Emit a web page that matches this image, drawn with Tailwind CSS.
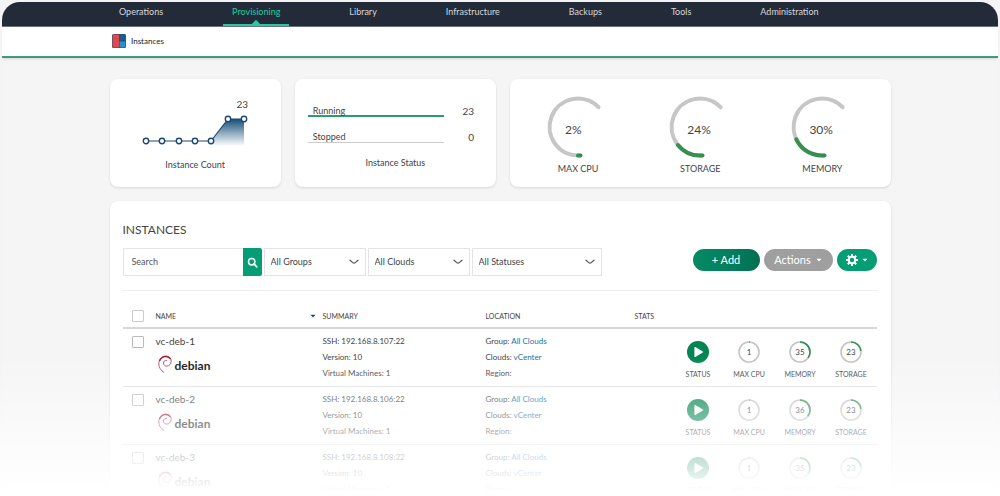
<!DOCTYPE html>
<html lang="en">
<head>
<meta charset="utf-8">
<title>Instances</title>
<script src="https://cdn.jsdelivr.net/npm/@tailwindcss/browser@4"></script>
</head>
<body class="relative h-screen overflow-hidden bg-[#f4f4f6] px-[2px] pt-[2px] font-['Lato',sans-serif] text-[9px] leading-[12px] text-[#444]">
<svg class="hidden">
  <symbol id="swirl" viewBox="0 0 14 18">
    <path d="M5.800 17.300C2.600 15.400 .8 12.400 .8 9C.8 4.400 3.800 1.200 7.600 1.100C11 1 13.300 3.300 13.200 6.200C13.100 9 11.200 11 9 11.100C7 11.200 5.500 9.900 5.500 8.100C5.500 6.400 6.700 5.200 8.600 5.300" fill="none" stroke="#b23a54" stroke-width=".9" stroke-linecap="round"/>
    <path d="M1.600 5.600C3.400 1.400 9 0 12.200 3.400" fill="none" stroke="#a8213f" stroke-width="1.400" stroke-linecap="round"/>
  </symbol>
  <symbol id="chevron" viewBox="0 0 10 6"><path d="M1 1.200C2.600 2.400 3.600 4.200 5 4.200S7.400 2.400 9 1.200" fill="none" stroke="#555" stroke-width="1.200" stroke-linecap="round"/></symbol>
  <symbol id="caret" viewBox="0 0 6 4"><path d="M.5 .8H5.500L3 3.400Z" fill="currentColor"/></symbol>
</svg>

<div class="h-full overflow-hidden rounded-t-[18px] bg-[#f5f5f5]">
  <nav class="flex h-[25px] justify-start gap-[51px] border-b border-[#6d7482] bg-[#232b38] pl-[108px] text-[#d5d8dd]">
    <a href="#" class="px-[9px] pt-[4px]">Operations</a>
    <a href="#" class="relative border-b-2 border-[#2cc9a0] px-[9px] pt-[4px] text-[#2cc9a0]">Provisioning
      <svg class="absolute bottom-0 left-1/2 h-[4px] w-[8px] -translate-x-1/2" viewBox="0 0 8 4"><path d="M0 4L3.200 .4Q4 -.2 4.800 .4L8 4Z" fill="#2cc9a0"/></svg></a>
    <a href="#" class="px-[9px] pt-[4px]">Library</a>
    <a href="#" class="px-[9px] pt-[4px]">Infrastructure</a>
    <a href="#" class="px-[9px] pt-[4px]">Backups</a>
    <a href="#" class="px-[9px] pt-[4px]">Tools</a>
    <a href="#" class="px-[9px] pt-[4px]">Administration</a>
  </nav>
  <div class="flex h-[31px] items-center gap-[5px] border-b-2 border-[#3f9c7b] bg-white pb-[2px] pl-[110px] text-[8px] shadow-sm">
    <svg class="h-[14px] w-[14px]" viewBox="0 0 14 14"><rect width="14" height="14" rx="1.500" fill="#264e70"/><path d="M1.500 .5H7V13.500H1.500Q.5 13.500 .5 12.500V1.500Q.5 .5 1.500 .5Z" fill="#e2474d"/><path d="M7.500 .5H12.500Q13.500 .5 13.500 1.500V6.500H7.500Z" fill="#1e5c8c"/><path d="M7.500 7.500H13.500V12.500Q13.500 13.500 12.500 13.500H7.500Z" fill="#2492cc"/></svg>
    <span class="text-[#222]">Instances</span>
  </div>

  <main class="mx-auto flex max-w-[781px] flex-col gap-[14px] pt-[21px]">
    <section class="grid h-[108px] grid-cols-[171fr_201fr_380fr] gap-[14px]">
      <div class="flex flex-col items-center rounded-lg bg-white pt-[19px] shadow">
        <div class="flex w-[106px] flex-col">
          <div class="self-end text-[10px]">23</div>
          <svg class="h-[36px] w-[106px]" viewBox="0 0 106 36">
            <defs><linearGradient id="area" x1="0" y1="0" x2="0" y2="1"><stop offset="0" stop-color="#164f78"/><stop offset="1" stop-color="#164f78" stop-opacity="0"/></linearGradient></defs>
            <path d="M69 31L86 9H102V36H69Z" fill="url(#area)"/>
            <path d="M4 31H69L86 9H102" fill="none" stroke="#1c4a6e" stroke-width="1.200"/>
            <g fill="#fff" stroke="#1c4a6e" stroke-width="1.400"><circle cx="4" cy="31" r="2.700"/><circle cx="20" cy="31" r="2.700"/><circle cx="37" cy="31" r="2.700"/><circle cx="53" cy="31" r="2.700"/><circle cx="69" cy="31" r="2.700"/><circle cx="86" cy="9" r="2.700"/><circle cx="102" cy="9" r="2.700"/></g>
          </svg>
        </div>
        <div class="mt-[13px]">Instance Count</div>
      </div>
      <div class="flex flex-col rounded-lg bg-white pt-[26px] pr-[22px] pl-[13px] shadow">
        <div class="flex h-[26px] justify-between"><span class="h-[12px] w-[136px] border-b-2 border-[#2f9c70] pl-[5px]">Running</span><span class="text-[10px]">23</span></div>
        <div class="flex h-[26px] justify-between"><span class="h-[12px] w-[136px] border-b border-[#ccc] pl-[5px]">Stopped</span><span class="text-[10px]">0</span></div>
        <div class="pl-[9px] text-center">Instance Status</div>
      </div>
      <div class="grid grid-cols-3 rounded-lg bg-white px-[7px] pt-[16px] shadow" id="gauges"></div>
    </section>

    <section class="rounded-t-lg bg-white pt-[20px] pr-[14px] pb-[20px] pl-[13px] shadow">
      <h1 class="text-[12px] leading-[18px]">INSTANCES</h1>
      <div class="mt-[9px] flex items-start justify-between border-b border-[#eee] pb-[14px]">
        <form class="flex gap-[2px]">
          <div class="flex h-[28px]">
            <input type="text" aria-label="Search" placeholder="Search" class="w-[120px] rounded-l-[2px] border border-r-0 border-[#e4e4e8] px-[8px] placeholder:text-[#555]">
            <button type="button" aria-label="Run search" class="flex w-[19px] items-center justify-center rounded-r-[2px] bg-[#049d74]">
              <svg class="h-[11px] w-[11px]" viewBox="0 0 11 11"><circle cx="4.700" cy="4.700" r="3.200" fill="none" stroke="#fff" stroke-width="1.500"/><path d="M7.200 7.200L9.800 9.800" stroke="#fff" stroke-width="1.800" stroke-linecap="round"/></svg>
            </button>
          </div>
          <div class="relative"><select aria-label="Group" class="h-[28px] w-[102px] appearance-none border border-[#e4e4e8] pl-[6px]"><option>All Groups</option></select><svg class="pointer-events-none absolute top-[11px] right-[7px] h-[6px] w-[10px]"><use href="#chevron"/></svg></div>
          <div class="relative"><select aria-label="Cloud" class="h-[28px] w-[102px] appearance-none border border-[#e4e4e8] pl-[6px]"><option>All Clouds</option></select><svg class="pointer-events-none absolute top-[11px] right-[7px] h-[6px] w-[10px]"><use href="#chevron"/></svg></div>
          <div class="relative"><select aria-label="Status" class="h-[28px] w-[130px] appearance-none border border-[#e4e4e8] pl-[6px]"><option>All Statuses</option></select><svg class="pointer-events-none absolute top-[11px] right-[7px] h-[6px] w-[10px]"><use href="#chevron"/></svg></div>
        </form>
        <div class="flex gap-[4px] pt-[1px] text-[11px] text-white">
          <button type="button" class="h-[22px] w-[67px] rounded-full bg-linear-to-r from-[#048a64] via-[#04805e] to-[#046e52]">+ Add</button>
          <button type="button" class="flex h-[22px] w-[69px] items-center justify-center gap-[5px] rounded-full bg-[#9f9f9f]">Actions <svg class="h-[4px] w-[6px]"><use href="#caret"/></svg></button>
          <button type="button" aria-label="Settings" class="flex h-[22px] w-[40px] items-center justify-center gap-[4px] rounded-full bg-[#049d74]">
            <svg class="h-[12px] w-[12px]" viewBox="0 0 12 12"><circle cx="6" cy="6" r="3.200" fill="none" stroke="#fff" stroke-width="2"/><path d="M6 0V2.500M6 9.500V12M0 6H2.500M9.500 6H12M1.800 1.800L3.500 3.500M8.500 8.500L10.200 10.200M1.800 10.200L3.500 8.500M8.500 3.500L10.200 1.800" stroke="#fff" stroke-width="2"/></svg>
            <svg class="h-[4px] w-[6px]"><use href="#caret"/></svg>
          </button>
        </div>
      </div>
      <table class="mt-[14px] w-full table-fixed border-collapse text-left">
        <colgroup><col class="w-[33px]"><col class="w-[167px]"><col class="w-[163px]"><col class="w-[149px]"><col></colgroup>
        <thead>
          <tr class="h-[23px] border-b-2 border-[#d8d8d8] text-[7px]">
            <th class="pl-[9px] font-normal"><input type="checkbox" aria-label="Select all" class="block h-[12px] w-[12px] appearance-none rounded-[1px] border border-[#ccc]"></th>
            <th class="font-normal"><div class="flex items-center justify-between pr-[7px]">NAME <svg class="h-[4px] w-[6px] text-[#1c4a6e]"><use href="#caret"/></svg></div></th>
            <th class="font-normal">SUMMARY</th><th class="font-normal">LOCATION</th><th class="font-normal">STATS</th>
          </tr>
        </thead>
        <tbody id="rows"></tbody>
      </table>
    </section>
  </main>
</div>
<div class="pointer-events-none absolute inset-x-0 bottom-0 h-[140px] bg-linear-to-b from-white/0 to-white to-97%"></div>

<script>
const gauges = [["2%", "MAX CPU", "32 60.5"], ["24%", "STORAGE", "9.9 50"], ["30%", "MEMORY", "6.3 44.300"]];
document.getElementById("gauges").innerHTML = gauges.map(([value, label, end]) => `
  <div class="flex flex-col items-center">
    <div class="grid h-[64px] w-[64px] items-center">
      <svg class="col-start-1 row-start-1 h-[64px] w-[64px]" viewBox="0 0 64 64" fill="none" stroke-width="4" stroke-linecap="round">
        <path d="M34.500 60.400A28.500 28.500 0 1 1 52.600 12.200" stroke="#c6c6c6"/>
        <path d="M34.500 60.400A28.500 28.500 0 0 1 ${end}" stroke="#35904f"/>
      </svg>
      <span class="col-start-1 row-start-1 pt-[6px] pl-[19px] text-[12px]">${value}</span>
    </div>
    <span class="mt-[4px]">${label}</span>
  </div>`).join("");

const ring = (value, label) => `
  <div class="flex w-[51px] flex-col items-center gap-[5px]">
    <div class="grid h-[22px] w-[22px] place-items-center">
      <svg class="col-start-1 row-start-1 h-[22px] w-[22px]" viewBox="0 0 22 22" fill="none" stroke-width="1.600">
        <circle cx="11" cy="11" r="10" stroke="#c4c4c4"/>
        <circle cx="11" cy="11" r="10" stroke="#35904f" pathLength="100" stroke-dasharray="${value} 100" transform="rotate(-90 11 11)"/>
      </svg>
      <span class="col-start-1 row-start-1 text-[8px]">${value}</span>
    </div>
    <span>${label}</span>
  </div>`;
const rows = [["vc-deb-1", "192.168.8.107", 35], ["vc-deb-2", "192.168.8.106", 36], ["vc-deb-3", "192.168.8.108", 35]];
document.getElementById("rows").innerHTML = rows.map(([name, ip, memory]) => `
  <tr class="border-b border-[#ddd] align-top">
    <td class="pt-[7px] pl-[9px]"><input type="checkbox" aria-label="Select ${name}" class="block h-[12px] w-[12px] appearance-none rounded-[1px] border border-[#bbb]"></td>
    <td class="h-[58px] pt-[6px]">
      <div class="text-[10px]">${name}</div>
      <div class="mt-[8px] flex gap-[3px] pl-[2px]">
        <svg class="h-[18px] w-[14px]"><use href="#swirl"/></svg>
        <span class="pt-[5px] text-[12px] font-bold text-[#111]">debian</span>
      </div>
    </td>
    <td class="pt-[4px] text-[8px] leading-[16px]">SSH: ${ip}:22<br>Version: 10<br>Virtual Machines: 1</td>
    <td class="pt-[4px] text-[8px] leading-[16px]">Group: <a href="#" class="text-[#1773a8]">All Clouds</a><br>Clouds: <a href="#" class="text-[#1773a8]">vCenter</a><br>Region:</td>
    <td class="pt-[12px]">
      <div class="flex justify-end text-[7px]">
        <div class="flex w-[51px] flex-col items-center gap-[5px]">
          <svg class="h-[22px] w-[22px]" viewBox="0 0 22 22"><circle cx="11" cy="11" r="11" fill="#028552"/><path d="M8 6.500L15.500 11L8 15.500Z" fill="#fff" stroke="#fff" stroke-width="1.200" stroke-linejoin="round"/></svg>
          <span>STATUS</span>
        </div>
        ${ring(1, "MAX CPU")}${ring(memory, "MEMORY")}${ring(23, "STORAGE")}
      </div>
    </td>
  </tr>`).join("");
</script>
</body>
</html>
